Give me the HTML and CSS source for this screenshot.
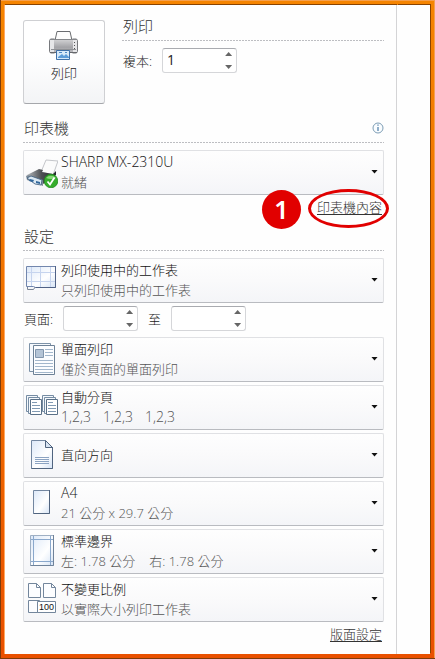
FILE: index.html
```
<!DOCTYPE html>
<html lang="zh-Hant">
<head>
    <meta charset="UTF-8">
    <meta name="viewport" content="width=device-width, initial-scale=1.0">
    <title>列印</title>
    <link rel="stylesheet" href="styles.css">
</head>
<body>
    <div class="frame">
        <main class="panel">
            <div class="top">
                <button class="print-button" type="button">
                    <svg width="30" height="30" viewBox="0 0 30 30" aria-hidden="true">
                        <defs>
                            <linearGradient id="metal" x1="0" y1="0" x2="0" y2="1">
                                <stop offset="0" stop-color="#d2d2d4"/>
                                <stop offset="0.6" stop-color="#a3a3a7"/>
                                <stop offset="1" stop-color="#bcbcc0"/>
                            </linearGradient>
                        </defs>
                        <path d="M8 .5h13l2 9H6z" fill="#fdfdfd" stroke="#6a6c70"/>
                        <path d="M.5 9.500l1-1.500h4v14h-4l-1-1.500z" fill="#e6e6e8" stroke="#77797d"/>
                        <path d="M23.500 8h4l1 1.500v11L27.500 22h-4z" fill="#e6e6e8" stroke="#77797d"/>
                        <path d="M5 8.500h19v13H5z" fill="url(#metal)"/>
                        <path d="M1 8.500h27" stroke="#85878b"/>
                        <path d="M2 18.500h25" stroke="#8f9195"/>
                        <path d="M1 21.500h27" stroke="#66686c"/>
                        <path d="M25.500 11v1M25.500 14v1M25.500 17v1" stroke="#555"/>
                        <path d="M7.500 19.500h13v9h-13z" fill="#d6e9f9" stroke="#3f70a8"/>
                        <path d="M9 26l4-3 2 2 2-2 3 3v1H9z" fill="#5b9bd8"/>
                        <path d="M10 21.500h3M16 21.500h2" stroke="#4d87c4"/>
                    </svg>
                    <span>列印</span>
                </button>
                <section class="copies">
                    <h2 class="heading">列印</h2>
                    <div class="field-row">
                        <label for="copies">複本:</label>
                        <div class="spinner">
                            <input id="copies" type="text" inputmode="numeric" value="1">
                            <div class="arrows">
                                <button class="up" type="button" aria-label="增加複本"></button>
                                <button class="down" type="button" aria-label="減少複本"></button>
                            </div>
                        </div>
                    </div>
                </section>
            </div>

            <section class="printer">
                <h2 class="heading">
                    <span>印表機</span>
                    <svg width="12" height="12" viewBox="0 0 12 12" aria-hidden="true">
                        <circle cx="6" cy="6" r="5" fill="#fafdff" stroke="#7d9db5"/>
                        <path d="M6 5v4M6 2.500v1.300" stroke="#4a7ba6" stroke-width="1.200"/>
                    </svg>
                </h2>
                <button class="option" type="button" aria-haspopup="listbox">
                    <svg class="icon" viewBox="0 0 32 32" aria-hidden="true">
                        <defs>
                            <linearGradient id="lid" x1="0" y1="0" x2="1" y2="0">
                                <stop offset="0" stop-color="#b5b8bc"/>
                                <stop offset="0.5" stop-color="#4c4f53"/>
                                <stop offset="1" stop-color="#24272b"/>
                            </linearGradient>
                        </defs>
                        <path d="M15 16l5-12 12 1-5 14z" fill="#fbfbfb" stroke="#b5b8bc" stroke-width=".8"/>
                        <path d="M1 19l12-6 4 1-1 2 11 2 3-3v4l-13 9z" fill="url(#lid)"/>
                        <path d="M0 20l2-1 15 5v6L1 24z" fill="#7e8b98"/>
                        <path d="M1 22l4-2 11 4-1 5-6-1z" fill="#dbe8f2" stroke="#38597b" stroke-width=".8"/>
                        <path d="M4 23l4 1-1 2-4-1zM10 25l4 1v2l-4-1z" fill="#31669b"/>
                        <circle cx="25" cy="25" r="6.800" fill="#35ad2c" stroke="#218a1d" stroke-width=".8"/>
                        <path d="M20 22a6 5 0 0 1 10 0q-5 2-10 0z" fill="#86d777"/>
                        <path d="M21.500 25.500l2.500 3 4.500-7" fill="none" stroke="#fff" stroke-width="1.800"/>
                    </svg>
                    <span class="text"><span class="name latin">SHARP MX-2310U</span><span class="detail">就緒</span></span>
                    <span class="caret"></span>
                </button>
                <div class="link-row">
                    <a class="marked" href="#">印表機內容
                        <span class="step">1</span>
                        <span class="ring"></span>
                    </a>
                </div>
            </section>

            <section class="settings">
                <h2 class="heading">設定</h2>
                <button class="option" type="button" aria-haspopup="listbox">
                    <svg class="icon" viewBox="0 0 32 32" aria-hidden="true">
                        <defs>
                            <linearGradient id="paper" x1="0" y1="0" x2="1" y2="1">
                                <stop offset="0" stop-color="#dce8f8"/>
                                <stop offset="0.6" stop-color="#ffffff"/>
                                <stop offset="1" stop-color="#d5e3f5"/>
                            </linearGradient>
                        </defs>
                        <path d="M1.500 22v3.500h6l2-3" fill="#f5f7fa" stroke="#7c8696"/>
                        <path d="M.5 2.500h29v21h-20l-2-1h-7z" fill="url(#paper)" stroke="#7286ad"/>
                        <path d="M1 8.500h28M1 17.500h28M5.500 3v19M14.500 3v20M24.500 3v20" stroke="#c6d4ee" fill="none"/>
                        <path d="M29.500 2v21.500h-20" fill="none" stroke="#4f6185"/>
                    </svg>
                    <span class="text"><span class="name">列印使用中的工作表</span><span class="detail">只列印使用中的工作表</span></span>
                    <span class="caret"></span>
                </button>

                <div class="field-row pages">
                    <label for="from">頁面:</label>
                    <div class="spinner">
                        <input id="from" type="text" inputmode="numeric">
                        <div class="arrows">
                            <button class="up" type="button" aria-label="增加起始頁"></button>
                            <button class="down" type="button" aria-label="減少起始頁"></button>
                        </div>
                    </div>
                    <label for="to">至</label>
                    <div class="spinner">
                        <input id="to" type="text" inputmode="numeric">
                        <div class="arrows">
                            <button class="up" type="button" aria-label="增加結束頁"></button>
                            <button class="down" type="button" aria-label="減少結束頁"></button>
                        </div>
                    </div>
                </div>

                <div class="options">
                    <button class="option" type="button" aria-haspopup="listbox">
                        <svg class="icon" viewBox="0 0 32 32" aria-hidden="true">
                            <path d="M3.500 .5h21v28h-21z" fill="#f6f9fd" stroke="#7d92a8"/>
                            <path d="M7.500 2.500h21v29h-21z" fill="#fcfdff" stroke="#6d8196"/>
                            <path d="M9.500 6.500h8v8h-8z" fill="#b4c4d6" stroke="#8296ad"/>
                            <path d="M19 6.500h8M19 9.500h8M19 12.500h8M9 17.500h18M9 20.500h18M9 23.500h18M9 26.500h18M9 29.500h18" stroke="#a3b7cc"/>
                        </svg>
                        <span class="text"><span class="name">單面列印</span><span class="detail">僅於頁面的單面列印</span></span>
                        <span class="caret"></span>
                    </button>
                    <button class="option" type="button" aria-haspopup="listbox">
                        <svg class="icon" viewBox="0 0 32 32" aria-hidden="true">
                            <defs>
                                <g id="stack">
                                    <path d="M.5 4.500h11v16h-11z" fill="#f4f8fc" stroke="#768ca3"/>
                                    <path d="M2.500 6.500h11v16h-11z" fill="#f4f8fc" stroke="#768ca3"/>
                                    <path d="M4.500 8.500h11v15h-11z" fill="#fff" stroke="#5a7087"/>
                                    <path d="M6 11.500h5M6 14.500h8M6 17.500h8M6 20.500h8" stroke="#819ab3"/>
                                </g>
                            </defs>
                            <use href="#stack"/>
                            <use href="#stack" x="16"/>
                        </svg>
                        <span class="text"><span class="name">自動分頁</span><span class="detail latin sets"><span>1,2,3</span><span>1,2,3</span><span>1,2,3</span></span></span>
                        <span class="caret"></span>
                    </button>
                    <button class="option" type="button" aria-haspopup="listbox">
                        <svg class="icon" viewBox="0 0 32 32" aria-hidden="true">
                            <path d="M5.500 1.500h14l7 7v21h-21z" fill="url(#paper)" stroke="#7286a0"/>
                            <path d="M19.500 1.500v7h7z" fill="#d7e4f3" stroke="#50647f"/>
                            <path d="M26.500 8v21.500h-21" fill="none" stroke="#50647f"/>
                            <path d="M9 18.500h14M9 20.500h14M9 22.500h14M9 24.500h14" stroke="#8ba3c2"/>
                        </svg>
                        <span class="text"><span class="name">直向方向</span></span>
                        <span class="caret"></span>
                    </button>
                    <button class="option" type="button" aria-haspopup="listbox">
                        <svg class="icon" viewBox="0 0 32 32" aria-hidden="true">
                            <path d="M7.500 3.500h16v23h-16z" fill="url(#paper)" stroke="#7286a0"/>
                            <path d="M23.500 3v23.500h-16" fill="none" stroke="#50647f"/>
                        </svg>
                        <span class="text"><span class="name latin">A4</span><span class="detail">21 公分 x 29.7 公分</span></span>
                        <span class="caret"></span>
                    </button>
                    <button class="option" type="button" aria-haspopup="listbox">
                        <svg class="icon" viewBox="0 0 32 32" aria-hidden="true">
                            <path d="M4.500 .5h23v30h-23z" fill="url(#paper)" stroke="#9fb0c4"/>
                            <path d="M7.500 1v29M24.500 1v29M5 4.500h22M5 26.500h22" stroke="#8aa8cc"/>
                            <path d="M27.500 0v30.500h-23" fill="none" stroke="#6f8299"/>
                        </svg>
                        <span class="text"><span class="name">標準邊界</span><span class="detail margins"><span>左: 1.78 公分</span><span>右: 1.78 公分</span></span></span>
                        <span class="caret"></span>
                    </button>
                    <button class="option" type="button" aria-haspopup="listbox">
                        <svg class="icon" viewBox="0 0 32 32" aria-hidden="true">
                            <path d="M2.500 .5h8l4 4v10h-12zM17.500 .5h8l4 4v10h-12zM2.500 17.500h11v12h-11z" fill="#fcfdff" stroke="#73869c"/>
                            <path d="M10.500 .5v4h4M25.500 .5v4h4" fill="none" stroke="#73869c"/>
                            <path d="M11.500 18.500h18v11h-18z" fill="#fff" stroke="#73869c"/>
                            <text class="percent" x="20.500" y="27" text-anchor="middle">100</text>
                        </svg>
                        <span class="text"><span class="name">不變更比例</span><span class="detail">以實際大小列印工作表</span></span>
                        <span class="caret"></span>
                    </button>
                </div>
                <div class="link-row">
                    <a href="#">版面設定</a>
                </div>
            </section>
        </main>
    </div>
</body>
</html>
```
FILE: styles.css
```
* {
    box-sizing: border-box;
}
body {
    margin: 0;
    font-family: "Open Sans", "Noto Sans CJK TC", sans-serif;
    font-size: 13px;
    font-weight: 300;
    line-height: 20px;
    color: #222222;
}
button, input {
    font: inherit;
    color: inherit;
}

/* orange bevelled frame */
.frame {
    display: flex;
    min-height: 100vh;
    padding: 5px;
    background: linear-gradient(#f58400, #f07000 50%, #e95000);
    box-shadow: inset 1px -1px 0 #7d3c0c, inset -1px 1px 0 #f4a050;
}
.frame::after {
    content: '';
    width: 33px;
    background-color: #fefefe;
    box-shadow: 1px -1px 0 #8a4300;
}
.panel {
    flex: 1;
    padding: 11px 12px 9px 18px;
    background-color: #fefefe;
    border-right: 1px solid #d4d4d6;
    box-shadow: 0 -1px 0 #8a4300, -1px 0 0 #ffa860;
}

.top {
    display: flex;
    align-items: flex-start;
    gap: 17px;
}
.print-button {
    display: flex;
    flex-direction: column;
    align-items: center;
    gap: 2px;
    width: 82px;
    height: 84px;
    margin-top: 4px;
    padding: 10px 0 0;
    background: linear-gradient(#ffffff 40%, #f3f4f6);
    border: 1px solid #cfd0d3;
    border-bottom-color: #a5a7ab;
    border-radius: 3px;
}
.copies {
    flex: 1;
}

.heading {
    display: flex;
    justify-content: space-between;
    align-items: center;
    margin: 0 0 7px;
    padding-bottom: 5px;
    padding-left: 1px;
    font-size: 15px;
    font-weight: 300;
    line-height: 20px;
    color: #333333;
    background: repeating-linear-gradient(to right, #bdbec2 0 2px, transparent 2px 3px) bottom / 100% 1px no-repeat;
}
.printer .heading {
    margin-top: 14px;
}
.settings .heading {
    margin-top: 9px;
}

.field-row {
    display: flex;
    align-items: center;
    gap: 10px;
    padding-left: 1px;
}
.pages {
    margin: 3px 0 6px;
}
.spinner {
    display: flex;
    width: 75px;
    height: 25px;
    background-color: #ffffff;
    border: 1px solid #d5d6d9;
    border-top-color: #a9abb0;
    border-radius: 3px;
}
.spinner input {
    flex: 1;
    min-width: 0;
    padding: 0 4px 2px;
    font-size: 14px;
    font-weight: 400;
    background: none;
    border: none;
}
.arrows {
    display: flex;
    flex-direction: column;
    justify-content: space-between;
    padding: 3px 4px;
}
.arrows button {
    width: 7px;
    height: 4px;
    padding: 0;
    border: none;
    background-color: #666666;
}
.arrows .up {
    clip-path: polygon(50% 0, 100% 100%, 0 100%);
}
.arrows .down {
    clip-path: polygon(0 0, 100% 0, 50% 100%);
}

.options {
    display: flex;
    flex-direction: column;
    gap: 3px;
}
.option {
    display: flex;
    align-items: center;
    gap: 3px;
    width: 100%;
    min-height: 45px;
    padding: 0 5px 2px 2px;
    text-align: left;
    background: linear-gradient(#fefefe, #fafafb 50%, #f4f5f8);
    border: 1px solid #e0e1e4;
    border-bottom-color: #b9bbc0;
    border-radius: 2px;
}
.icon {
    flex: none;
    width: 32px;
    height: 32px;
}
.text {
    flex: 1;
}
.name, .detail {
    display: block;
}
.name {
    color: #111111;
}
.detail {
    color: #555555;
}
.latin {
    font-size: 14px;
}
.sets {
    display: flex;
    gap: 12px;
}
.margins {
    display: flex;
    gap: 14px;
}
.caret {
    width: 7px;
    height: 4px;
    background-color: #111111;
    clip-path: polygon(0 0, 100% 0, 50% 100%);
}
.percent {
    font-family: "Liberation Sans", Arial, sans-serif;
    font-size: 9px;
    font-weight: 400;
    fill: #111111;
}

.link-row {
    display: flex;
    justify-content: flex-end;
    padding: 2px 2px 0 0;
}
.link-row a {
    color: #333333;
    text-underline-offset: 2px;
}

/* numbered callout over the printer link */
.marked {
    position: relative;
}
.step {
    position: absolute;
    top: -7px;
    right: 81px;
    width: 39px;
    height: 39px;
    border-radius: 50%;
    background-color: #e10000;
    color: #ffffff;
    font-family: "Noto Sans", sans-serif;
    font-size: 25px;
    font-weight: 600;
    line-height: 38px;
    text-align: center;
}
.ring {
    position: absolute;
    top: -8px;
    right: -7px;
    width: 81px;
    height: 39px;
    border: 3px solid #e10000;
    border-radius: 50%;
}
```
